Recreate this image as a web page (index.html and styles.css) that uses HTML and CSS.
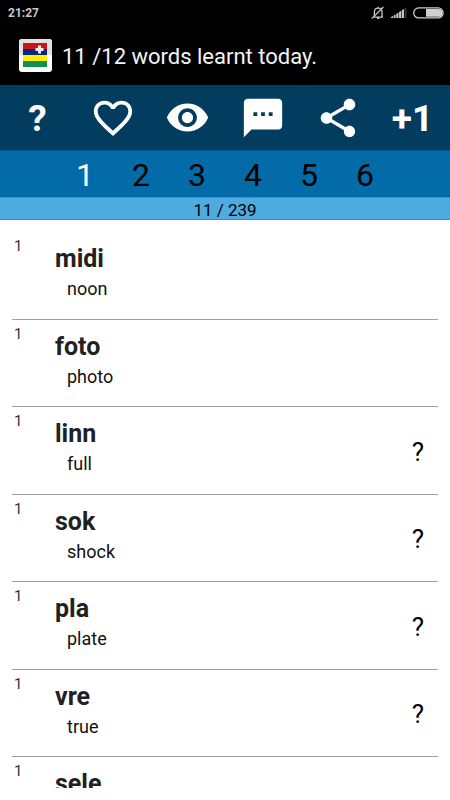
FILE: index.html
```html
<!DOCTYPE html>
<html lang="en">
<head>
  <meta charset="UTF-8">
  <meta name="viewport" content="width=device-width, initial-scale=1">
  <title>Words learnt today</title>
  <link rel="stylesheet" href="styles.css">
</head>
<body>

<div class="status-bar">
  <span class="clock">21:27</span>
  <div class="status-icons">
    <svg width="14" height="14" viewBox="0 0 14 14" fill="none" stroke="#c4c4c4">
      <path d="M2.5 11.2h9.6M3.4 11V5.8Q3.4 2.2 7.2 2.2T11 5.8V11M7.2 2V.8M6 12.4h2.4" stroke-width="1.3"/>
      <path d="M.8 12.6L12.4 1" stroke-width="1.3"/>
    </svg>
    <svg width="16" height="11" viewBox="0 0 16 11" fill="#c4c4c4">
      <path d="M0 11V10L2 9V11zM2.6 11V8.6L4.6 7.4V11zM5.2 11V7L7.4 5.6V11zM8 11V5.2L10 3.8V11zM10.6 11V3.4L13 1.8V11z"/>
      <path d="M13.6 1.4L15.6 0V11H13.6z" fill="#333"/>
    </svg>
    <svg width="31" height="12" viewBox="0 0 31 12">
      <rect x=".7" y=".9" width="29.4" height="10" rx="5" fill="none" stroke="#d0d0d0" stroke-width="1.3"/>
      <path d="M13 2h12.5a3.9 3.9 0 0 1 0 7.8H13z" fill="#d0d0d0"/>
    </svg>
  </div>
</div>

<header class="title-bar">
  <svg class="logo" width="33" height="33" viewBox="0 0 33 33">
    <rect width="33" height="33" rx="3" fill="#fff"/>
    <path d="M0 16V3Q0 0 3 0h27q3 0 3 3v13z" fill="#e2e2e2"/>
    <path d="M4 4h24v6H4z" fill="#c9141b"/>
    <path d="M4 10h24v6H4z" fill="#04267c"/>
    <path d="M4 16h24v6H4z" fill="#ffec00"/>
    <path d="M4 22h24v6H4z" fill="#109150"/>
    <path d="M19 6.500h3V9h2.500v3H22v2.500h-3V12h-2.500V9H19z" fill="#eee"/>
  </svg>
  <h1>11 /12 words learnt today.</h1>
</header>

<nav class="toolbar">
  <button type="button" class="tool-text" aria-label="Help">?</button>
  <button type="button" aria-label="Favourites">
    <svg width="46" height="46" viewBox="0 0 24 24"><path d="M16.500 3c-1.740 0-3.410.81-4.500 2.090C10.910 3.810 9.240 3 7.500 3 4.420 3 2 5.420 2 8.500c0 3.780 3.400 6.860 8.550 11.540L12 21.350l1.450-1.320C18.600 15.360 22 12.280 22 8.500 22 5.420 19.580 3 16.500 3zm-4.400 15.550l-.1.100-.1-.1C7.140 14.240 4 11.390 4 8.500 4 6.500 5.500 5 7.500 5c1.540 0 3.040.99 3.570 2.360h1.870C13.460 5.990 14.960 5 16.500 5c2 0 3.500 1.500 3.500 3.500 0 2.890-3.140 5.740-7.900 10.050z"/></svg>
  </button>
  <button type="button" aria-label="Show">
    <svg width="45" height="45" viewBox="0 0 24 24"><path d="M12 4.500C7 4.500 2.730 7.610 1 12c1.730 4.390 6 7.500 11 7.500s9.270-3.110 11-7.500c-1.730-4.390-6-7.500-11-7.500zM12 17c-2.760 0-5-2.240-5-5s2.240-5 5-5 5 2.240 5 5-2.240 5-5 5zm0-8c-1.660 0-3 1.340-3 3s1.340 3 3 3 3-1.340 3-3-1.340-3-3-3z"/></svg>
  </button>
  <button type="button" aria-label="Feedback">
    <svg width="46" height="46" viewBox="0 0 24 24"><path d="M20 2H4c-1.100 0-1.990.9-1.990 2L2 22l4-4h14c1.100 0 2-.9 2-2V4c0-1.100-.9-2-2-2zM9 11H7V9h2v2zm4 0h-2V9h2v2zm4 0h-2V9h2v2z"/></svg>
  </button>
  <button type="button" aria-label="Share">
    <svg width="46" height="46" viewBox="0 0 24 24"><path d="M18 16.080c-.76 0-1.440.3-1.960.77L8.910 12.700c.05-.23.09-.46.09-.7s-.04-.47-.09-.7l7.050-4.110c.54.5 1.250.81 2.040.81 1.660 0 3-1.340 3-3s-1.340-3-3-3-3 1.340-3 3c0 .24.04.47.09.7L8.040 9.810C7.500 9.310 6.790 9 6 9c-1.660 0-3 1.340-3 3s1.340 3 3 3c.79 0 1.500-.31 2.040-.81l7.120 4.160c-.05.21-.08.43-.08.65 0 1.610 1.310 2.920 2.920 2.920s2.920-1.310 2.920-2.920-1.310-2.920-2.920-2.920z"/></svg>
  </button>
  <button type="button" class="tool-text">+1</button>
</nav>

<nav class="levels">
  <button type="button" class="active">1</button>
  <button type="button">2</button>
  <button type="button">3</button>
  <button type="button">4</button>
  <button type="button">5</button>
  <button type="button">6</button>
</nav>

<div class="progress">11 / 239</div>

<main>
  <ul class="word-list">
    <li>
      <span class="level">1</span>
      <div class="entry"><h2>midi</h2><p>noon</p></div>
    </li>
    <li>
      <span class="level">1</span>
      <div class="entry"><h2>foto</h2><p>photo</p></div>
    </li>
    <li>
      <span class="level">1</span>
      <div class="entry"><h2>linn</h2><p>full</p></div>
      <button type="button">?</button>
    </li>
    <li>
      <span class="level">1</span>
      <div class="entry"><h2>sok</h2><p>shock</p></div>
      <button type="button">?</button>
    </li>
    <li>
      <span class="level">1</span>
      <div class="entry"><h2>pla</h2><p>plate</p></div>
      <button type="button">?</button>
    </li>
    <li>
      <span class="level">1</span>
      <div class="entry"><h2>vre</h2><p>true</p></div>
      <button type="button">?</button>
    </li>
    <li>
      <span class="level">1</span>
      <div class="entry"><h2>sele</h2></div>
    </li>
  </ul>
</main>

</body>
</html>
```
FILE: styles.css
```css
* {
  box-sizing: border-box;
}
body {
  font-family: Roboto, sans-serif;
  margin: 0;
  height: 100vh;
  display: flex;
  flex-direction: column;
  background: white;
  color: #000;
}
h1, h2, p, ul {
  margin: 0;
  padding: 0;
}
button {
  font-family: inherit;
  background: none;
  border: none;
  padding: 0;
  cursor: pointer;
}
.status-bar {
  display: flex;
  flex-shrink: 0;
  justify-content: space-between;
  align-items: center;
  height: 25px;
  padding: 0 6px 0 8px;
  background: #000;
}
.clock {
  color: #c8c8c8;
  font-size: 12px;
  font-weight: bold;
}
.status-icons {
  display: flex;
  align-items: center;
  gap: 6px;
}
.title-bar {
  display: flex;
  flex-shrink: 0;
  align-items: center;
  gap: 10px;
  height: 60px;
  padding: 0 19px;
  background: #000;
}
.title-bar h1 {
  padding-top: 2px;
  color: #f4f4f4;
  font-size: 22px;
  font-weight: normal;
}
.toolbar {
  display: grid;
  flex-shrink: 0;
  grid-template-columns: repeat(6, 1fr);
  height: 65px;
  background: #023d60;
}
.toolbar button {
  display: flex;
  align-items: center;
  justify-content: center;
  color: white;
}
.toolbar svg {
  fill: white;
}
.toolbar .tool-text {
  padding-top: 2px;
  font-size: 37px;
  font-weight: bold;
}
.levels {
  display: flex;
  flex-shrink: 0;
  justify-content: center;
  height: 47px;
  background: #036ba8;
  border-top: 1px solid #035a8d;
}
.levels button {
  padding-top: 2px;
  width: 56px;
  font-size: 32px;
  color: #000;
}
.levels .active {
  color: white;
}
.progress {
  flex-shrink: 0;
  height: 23px;
  line-height: 24px;
  font-size: 17px;
  text-align: center;
  background: #4dabdf;
  border-top: 1px solid #3a8fc6;
  border-bottom: 1px solid #0a9cdb;
}
main {
  flex: 1;
  min-height: 0;
  padding: 12px;
  display: flex;
}
.word-list {
  flex: 1;
  overflow: hidden;
  list-style: none;
}
.word-list li {
  display: flex;
  height: 88px;
  border-bottom: 1px solid #a0a0a0;
}
.word-list li:nth-child(even) {
  height: 87px;
}
.level {
  width: 43px;
  padding: 5px 0 0 2px;
  font-size: 15px;
  line-height: 18px;
  color: #333;
}
.entry {
  flex: 1;
  padding-top: 12px;
}
.entry h2 {
  font-size: 25px;
  line-height: 30px;
  color: #212121;
}
.entry p {
  padding: 3px 0 0 12px;
  font-size: 18px;
  line-height: 24px;
  color: #111;
}
.word-list button {
  padding-top: 2px;
  width: 40px;
  font-size: 26px;
}
```
